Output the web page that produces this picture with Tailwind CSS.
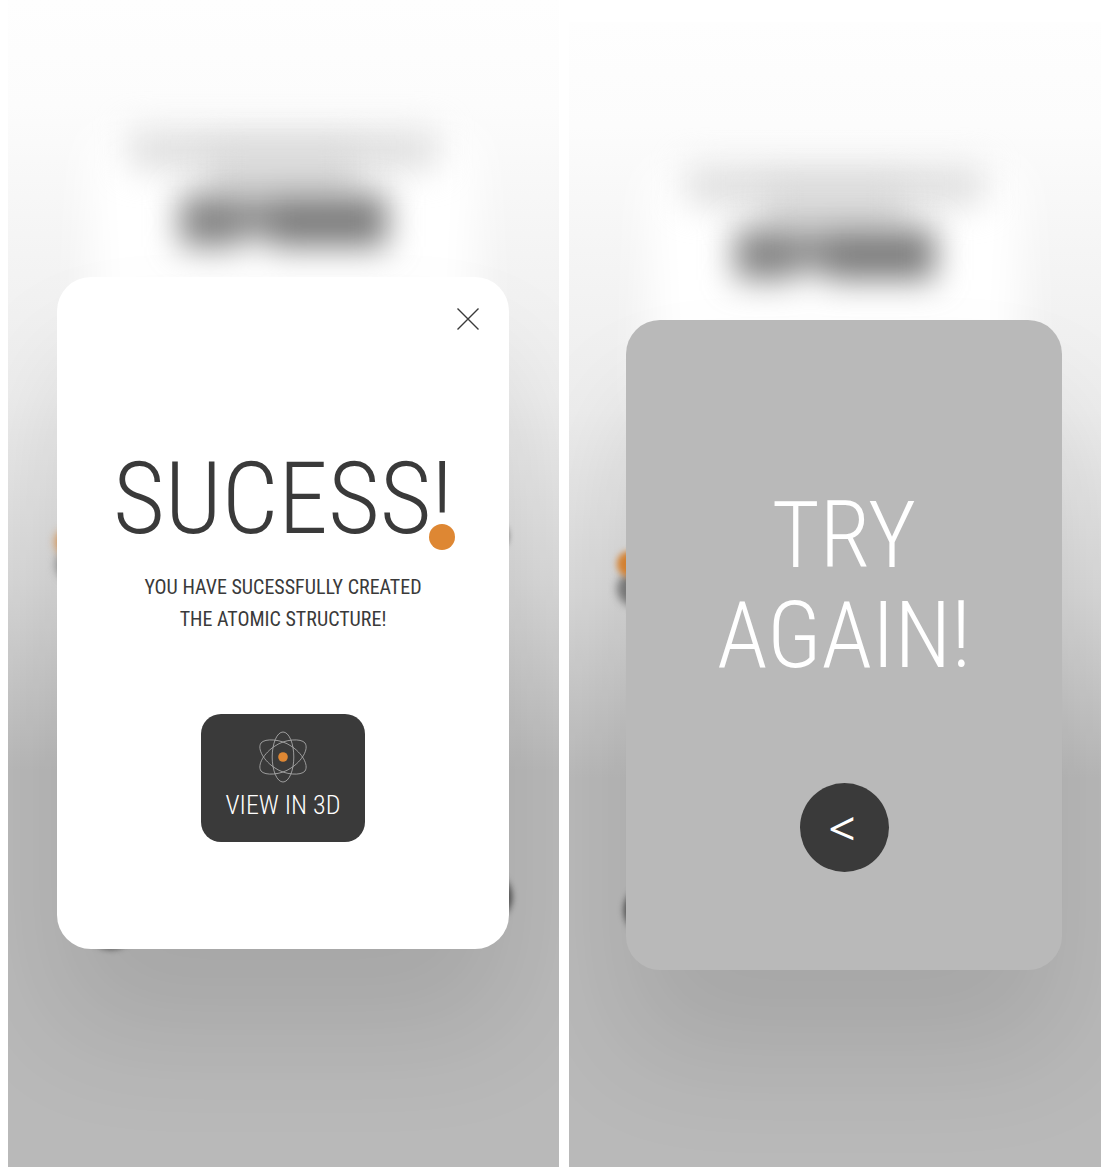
<!DOCTYPE html>
<html lang="en">
<head>
<meta charset="utf-8">
<meta name="viewport" content="width=device-width, initial-scale=1">
<title>Atomic structure – results</title>
<script src="https://cdn.jsdelivr.net/npm/@tailwindcss/browser@4"></script>
</head>
<body class="min-h-screen bg-white font-['Roboto_Condensed','Roboto',sans-serif] text-[#3a3a3a]">
<main class="grid min-h-screen grid-cols-[551fr_532fr] gap-[10px] pr-[11px] pb-2 pl-2">

  <!-- Success screen -->
  <section class="relative isolate overflow-hidden bg-[linear-gradient(#fefefe,#fcfcfc_9%,#f5f5f5_20%,#ededed_34%,#d8d8d8_50%,#b9b9b9_66%)] pt-[277px] pr-[50px] pb-[217px] pl-[49px]">
    <div class="absolute inset-0 -z-10" aria-hidden="true">
      <div class="absolute inset-x-[82px] top-[128px] h-[260px] bg-white blur-[22px]"></div>
      <div class="absolute inset-x-[122px] top-[132px] h-[36px] bg-[#dcdcdc] blur-[17px]"></div>
      <div class="absolute inset-x-[200px] top-[150px] h-[50px] bg-[#d8d8d8] blur-[17px]"></div>
      <div class="absolute inset-x-[172px] top-[195px] flex h-[52px] blur-[16px]">
        <div class="w-[60px] bg-[#848484]"></div>
        <div class="mb-[8px] w-[30px] bg-[#949494]"></div>
        <div class="flex-1 bg-[#7c7c7c]"></div>
      </div>
      <div class="absolute top-[548px] left-[48px] size-[34px] rounded-full bg-[#8c8c8c] blur-[4px]"></div>
      <div class="absolute top-[529px] left-[48px] size-[26px] rounded-full bg-[#de8733] blur-[5px]"></div>
      <div class="absolute top-[518px] right-[49px] size-[36px] rounded-full bg-[#a0a0a0] blur-[2px]"></div>
      <div class="absolute top-[872px] right-[47px] size-[50px] rounded-full bg-[#4a4a4a] blur-[3px]"></div>
      <div class="absolute top-[899px] left-[78px] size-[50px] rounded-full bg-[#4a4a4a] blur-[3px]"></div>
    </div>
    <div role="dialog" aria-labelledby="success-title" class="relative flex flex-col items-center rounded-[34px] bg-white pt-[172px] pb-[107px] shadow-[0_80px_120px_rgba(0,0,0,0.1)]">
      <button type="button" aria-label="Close" class="absolute top-[30px] right-[29px] size-6">
        <svg viewBox="0 0 24 24" class="size-6" fill="none" stroke="#3a3a3a" stroke-width="1.4"><path d="M1.5 1.5 22.5 22.5M22.5 1.5 1.5 22.5"/></svg>
      </button>
      <h1 id="success-title" class="text-[100px] leading-[100px] font-light whitespace-nowrap">SUCESS<span class="relative">!<span class="absolute bottom-[7px] left-1/2 size-[26px] -translate-x-1/2 rounded-full bg-[#de8733]"></span></span></h1>
      <p class="mt-[22px] text-center text-[20px] leading-8">YOU HAVE SUCESSFULLY CREATED<br>THE ATOMIC STRUCTURE!</p>
      <button type="button" class="mt-[79px] flex h-[128px] w-[164px] flex-col items-center rounded-[20px] bg-[#3a3a3a] pt-[17px] text-white">
        <svg viewBox="0 0 48 52" class="h-[52px] w-12" fill="none" stroke="#b5b5b5" stroke-width="0.8" aria-hidden="true">
          <ellipse cx="24" cy="26" rx="10.8" ry="25"/>
          <path id="orbit" d="M2 12C6 7 22 8 32 15C43 22 50 34 46 40C42 45 26 44 16 37C5 30 -2 18 2 12Z"/>
          <use href="#orbit" transform="matrix(-1 0 0 1 48 0)"/>
          <circle cx="24" cy="26" r="4.8" fill="#de8733" stroke="none"/>
        </svg>
        <span class="mt-[6px] text-[26px] leading-8 font-light">VIEW IN 3D</span>
      </button>
    </div>
  </section>

  <!-- Retry screen -->
  <section class="relative isolate mt-[22px] overflow-hidden bg-[linear-gradient(#fefefe,#fcfcfc_9%,#f5f5f5_20%,#ededed_34%,#d8d8d8_50%,#b9b9b9_66%)] pt-[298px] pr-[39px] pb-[197px] pl-[57px]">
    <div class="absolute inset-0 -z-10" aria-hidden="true">
      <div class="absolute inset-x-[80px] top-[142px] h-[250px] bg-white blur-[22px]"></div>
      <div class="absolute inset-x-[118px] top-[146px] h-[36px] bg-[#dcdcdc] blur-[17px]"></div>
      <div class="absolute inset-x-[194px] top-[164px] h-[48px] bg-[#d8d8d8] blur-[17px]"></div>
      <div class="absolute inset-x-[166px] top-[207px] flex h-[51px] blur-[16px]">
        <div class="w-[60px] bg-[#848484]"></div>
        <div class="mb-[8px] w-[30px] bg-[#949494]"></div>
        <div class="flex-1 bg-[#7c7c7c]"></div>
      </div>
      <div class="absolute top-[550px] left-[48px] size-[34px] rounded-full bg-[#7c7c7c] blur-[4px]"></div>
      <div class="absolute top-[529px] left-[48px] size-[26px] rounded-full bg-[#de8733] blur-[3px]"></div>
      <div class="absolute top-[863px] left-[55px] size-[50px] rounded-full bg-[#4a4a4a] blur-[3px]"></div>
    </div>
    <div role="dialog" aria-labelledby="retry-title" class="flex flex-col items-center rounded-[34px] bg-[#b9b9b9] pt-[166px] pb-[98px] text-white shadow-[0_80px_120px_rgba(0,0,0,0.1)]">
      <h2 id="retry-title" class="text-center text-[92px] leading-[100px] font-light">TRY<br>AGAIN!</h2>
      <button type="button" aria-label="Back" class="mt-[97px] size-[89px] rounded-full bg-[#3a3a3a] pr-1 font-['Open_Sans',sans-serif] text-[48px] leading-[89px]">&lt;</button>
    </div>
  </section>

</main>
</body>
</html>
